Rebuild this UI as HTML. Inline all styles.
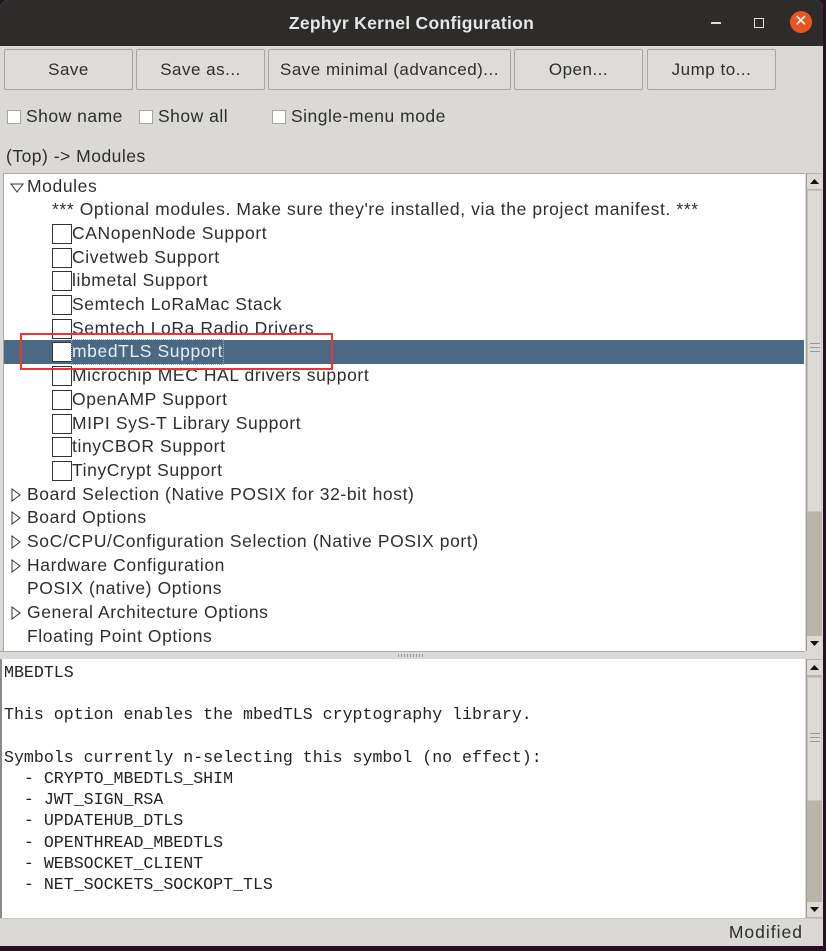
<!DOCTYPE html>
<html><head><style>
*{margin:0;padding:0;box-sizing:border-box}
body{width:826px;height:951px;background:#2a0f22;position:relative;overflow:hidden;font-family:"Liberation Sans","DejaVu Sans",sans-serif;font-size:17px;color:#2e2e2e;letter-spacing:0.5px}
#win{position:absolute;left:0;top:0;width:823px;height:946px;background:#dad9d5;border-radius:8px 8px 0 0;overflow:hidden}
#title{position:absolute;left:0;top:0;width:823px;height:46px;background:#2d2c2b;color:#e6e6e6;font-weight:bold;font-size:17.5px;text-align:center;line-height:46px;letter-spacing:0.3px}
.btn{position:absolute;top:49px;height:41px;border:1px solid #a9a59e;background:#dedcd8;border-radius:2px;text-align:center;line-height:39px;font-size:17px;color:#2e2e2e}
.cb{position:absolute;top:110px;width:14px;height:14px;border:1px solid #a7a49d;background:#fff}
.lbl{position:absolute;top:106px;font-size:17.5px}
#tree{position:absolute;left:3px;top:173px;width:802px;height:478px;background:#fff;border-top:1px solid #aeaaa3;border-left:1px solid #aeaaa3;overflow:hidden;font-size:17.5px;letter-spacing:0.6px}
.row{position:absolute;left:0;width:800px;height:23.7px;line-height:23.7px;white-space:nowrap}
.chk{position:absolute;left:48px;top:2px;width:20px;height:20px;border:1px solid #333;background:#fff}
.tri{position:absolute;left:6px;top:6px}
.sb{position:absolute;left:806px;width:16px;background:#b9b5ab;border-left:1px solid #a09c94}
.arr{position:absolute;left:0;width:15px;height:15px;background:#dcdad5}
.thumb{position:absolute;left:0;width:15px;background:#dcdad5;border:1px solid #c8c5be}
#txt{position:absolute;left:0;top:659px;width:805px;height:259px;background:#fff;border-left:2px solid #8c8a85;font-family:"Liberation Mono","DejaVu Sans Mono",monospace;font-size:16.6px;letter-spacing:0;line-height:21.2px;white-space:pre;padding:3px 0 0 2px;color:#222}
</style></head><body>
<div id="win">
<div id="title">Zephyr Kernel Configuration
<div style="position:absolute;left:711px;top:22px;width:10px;height:2px;background:#ddd"></div>
<div style="position:absolute;left:754px;top:18px;width:10px;height:10px;border:1.5px solid #ddd"></div>
<div style="position:absolute;left:790px;top:11px;width:22px;height:22px;border-radius:50%;background:#e95420;color:#fff;font-size:16px;line-height:22px;font-weight:normal">✕</div>
</div>
<div class="btn" style="left:4px;width:129px">Save</div>
<div class="btn" style="left:136px;width:129px">Save as...</div>
<div class="btn" style="left:268px;width:243px">Save minimal (advanced)...</div>
<div class="btn" style="left:514px;width:129px">Open...</div>
<div class="btn" style="left:647px;width:129px">Jump to...</div>
<div class="cb" style="left:7px"></div><div class="lbl" style="left:26px">Show name</div>
<div class="cb" style="left:139px"></div><div class="lbl" style="left:158px">Show all</div>
<div class="cb" style="left:272px"></div><div class="lbl" style="left:291px">Single-menu mode</div>
<div class="lbl" style="left:6px;top:146px">(Top) -&gt; Modules</div>

<div id="tree">
<div class="row" style="top:0.5px"><svg class="tri" width="14" height="12" style="top:7px"><path d="M1 2 L13 2 L7 10 Z" fill="none" stroke="#333"/></svg><span style="position:absolute;left:23px">Modules</span></div>
<div class="row" style="top:24.2px"><span style="position:absolute;left:48px">*** Optional modules. Make sure they're installed, via the project manifest. ***</span></div>
<div class="row" style="top:47.9px"><div class="chk"></div><span style="position:absolute;left:68px">CANopenNode Support</span></div>
<div class="row" style="top:71.6px"><div class="chk"></div><span style="position:absolute;left:68px">Civetweb Support</span></div>
<div class="row" style="top:95.3px"><div class="chk"></div><span style="position:absolute;left:68px">libmetal Support</span></div>
<div class="row" style="top:119px"><div class="chk"></div><span style="position:absolute;left:68px">Semtech LoRaMac Stack</span></div>
<div class="row" style="top:142.7px"><div class="chk"></div><span style="position:absolute;left:68px">Semtech LoRa Radio Drivers</span></div>
<div class="row" style="top:166.4px;background:#4a6984;color:#e8edf2"><div class="chk"></div><span style="position:absolute;left:68px;outline:1px dotted #9fb3c4">mbedTLS Support</span></div>
<div class="row" style="top:190.1px"><div class="chk"></div><span style="position:absolute;left:68px">Microchip MEC HAL drivers support</span></div>
<div class="row" style="top:213.8px"><div class="chk"></div><span style="position:absolute;left:68px">OpenAMP Support</span></div>
<div class="row" style="top:237.5px"><div class="chk"></div><span style="position:absolute;left:68px">MIPI SyS-T Library Support</span></div>
<div class="row" style="top:261.2px"><div class="chk"></div><span style="position:absolute;left:68px">tinyCBOR Support</span></div>
<div class="row" style="top:284.9px"><div class="chk"></div><span style="position:absolute;left:68px">TinyCrypt Support</span></div>
<div class="row" style="top:308.6px"><svg class="tri" width="12" height="14" style="left:6px;top:5px"><path d="M2 1 L10 7 L2 13 Z" fill="none" stroke="#333"/></svg><span style="position:absolute;left:23px">Board Selection (Native POSIX for 32-bit host)</span></div>
<div class="row" style="top:332.3px"><svg class="tri" width="12" height="14" style="left:6px;top:5px"><path d="M2 1 L10 7 L2 13 Z" fill="none" stroke="#333"/></svg><span style="position:absolute;left:23px">Board Options</span></div>
<div class="row" style="top:356px"><svg class="tri" width="12" height="14" style="left:6px;top:5px"><path d="M2 1 L10 7 L2 13 Z" fill="none" stroke="#333"/></svg><span style="position:absolute;left:23px">SoC/CPU/Configuration Selection (Native POSIX port)</span></div>
<div class="row" style="top:379.7px"><svg class="tri" width="12" height="14" style="left:6px;top:5px"><path d="M2 1 L10 7 L2 13 Z" fill="none" stroke="#333"/></svg><span style="position:absolute;left:23px">Hardware Configuration</span></div>
<div class="row" style="top:403.4px"><span style="position:absolute;left:23px">POSIX (native) Options</span></div>
<div class="row" style="top:427.1px"><svg class="tri" width="12" height="14" style="left:6px;top:5px"><path d="M2 1 L10 7 L2 13 Z" fill="none" stroke="#333"/></svg><span style="position:absolute;left:23px">General Architecture Options</span></div>
<div class="row" style="top:450.8px"><span style="position:absolute;left:23px">Floating Point Options</span></div>
</div>
<div class="sb" style="top:173px;height:478px">
<div class="arr" style="top:1px"><svg width="15" height="15"><path d="M3 10 L12 10 L7.5 5 Z" fill="#111"/></svg></div>
<div class="thumb" style="top:17px;height:322px"><div style="position:absolute;left:2px;top:152px;width:10px;height:9px;border-top:1px solid #999;border-bottom:1px solid #999"><div style="margin-top:3px;border-top:1px solid #999"></div></div></div>
<div class="arr" style="top:463px"><svg width="15" height="15"><path d="M3 5 L12 5 L7.5 10 Z" fill="#111"/></svg></div>
</div>
<div style="position:absolute;left:0;top:651px;width:805px;height:8px;background:#dad9d5;border-top:1px solid #aeaaa3"><div style="position:absolute;left:398px;top:2px;width:25px;height:3px;background:repeating-linear-gradient(90deg,#999 0 1px,transparent 1px 3px)"></div></div>
<div id="txt">MBEDTLS

This option enables the mbedTLS cryptography library.

Symbols currently n-selecting this symbol (no effect):
  - CRYPTO_MBEDTLS_SHIM
  - JWT_SIGN_RSA
  - UPDATEHUB_DTLS
  - OPENTHREAD_MBEDTLS
  - WEBSOCKET_CLIENT
  - NET_SOCKETS_SOCKOPT_TLS</div>
<div class="sb" style="top:659px;height:259px">
<div class="arr" style="top:1px"><svg width="15" height="15"><path d="M3 10 L12 10 L7.5 5 Z" fill="#111"/></svg></div>
<div class="thumb" style="top:18px;height:124px"><div style="position:absolute;left:2px;top:55px;width:10px;height:9px;border-top:1px solid #999;border-bottom:1px solid #999"><div style="margin-top:3px;border-top:1px solid #999"></div></div></div>
<div class="arr" style="top:243px"><svg width="15" height="15"><path d="M3 5 L12 5 L7.5 10 Z" fill="#111"/></svg></div>
</div>
<div style="position:absolute;left:0;top:918px;width:823px;height:28px;border-top:1px solid #c8c5be"><span style="position:absolute;right:20px;top:3px;font-size:17.5px;letter-spacing:1px">Modified</span></div>
</div>
<div style="position:absolute;left:20px;top:333px;width:313px;height:37px;border:2px solid #ee3333"></div>
</body></html>
